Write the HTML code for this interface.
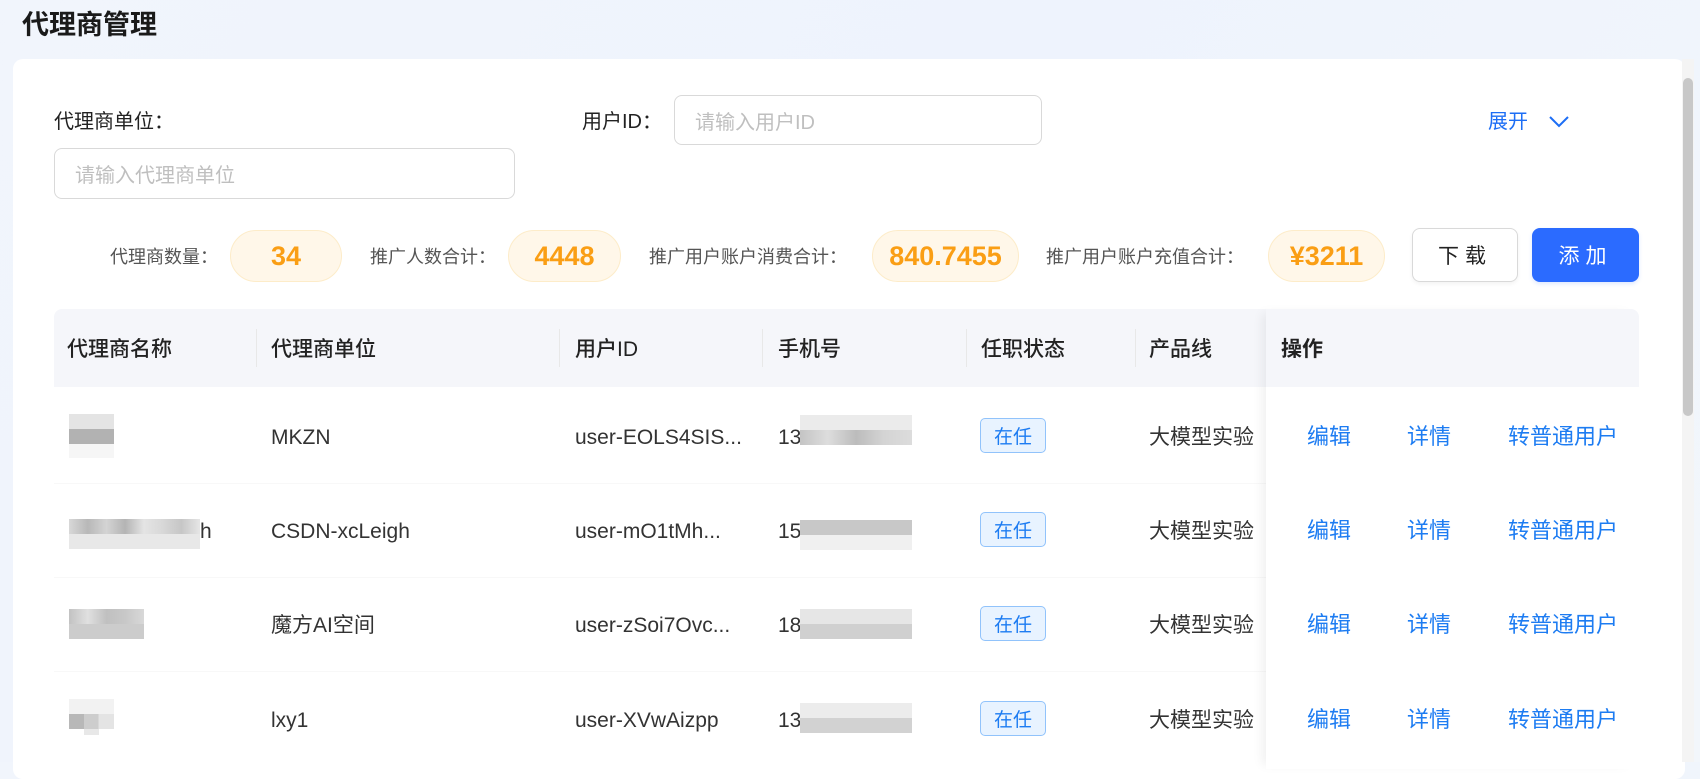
<!DOCTYPE html>
<html><head><meta charset="utf-8">
<style>
*{margin:0;padding:0;box-sizing:border-box}
body{width:1700px;height:762px;overflow:hidden;position:relative;background:linear-gradient(120deg,#f1f5fc 0%,#eef3fd 50%,#f2f6fb 100%);font-family:"Liberation Sans","Noto Sans CJK SC",sans-serif;color:#333}
.a{position:absolute;white-space:nowrap;line-height:30px}
.card{position:absolute;left:13px;top:59px;width:1672px;height:720px;background:#fff;border-radius:10px}
.lbl{font-size:20px;color:#222}
.inp{position:absolute;border:1px solid #d9d9d9;border-radius:8px;background:#fff;font-size:20px;color:#bfbfbf;padding-left:20px;display:flex;align-items:center}
.sl{font-size:18px;color:#555;top:242px}
.pill{position:absolute;top:230px;height:52px;border-radius:26px;background:#fff7e9;border:1px solid #fdecc9;color:#fa9e14;font-weight:bold;font-size:27px;display:flex;align-items:center;justify-content:center}
.btn{position:absolute;top:228px;height:54px;border-radius:8px;font-size:21px;display:flex;align-items:center;justify-content:center;letter-spacing:6px}
.th{font-size:21px;color:#222;font-weight:500;top:335px}
.sep{position:absolute;top:329px;width:1px;height:38px;background:#e8e8e8}
.td{font-size:21px;color:#333}
.tag{position:absolute;left:980px;width:66px;height:35px;border:1px solid #91c3fb;background:#e8f3ff;border-radius:5px;color:#1d7cf2;font-size:19px;display:flex;align-items:center;justify-content:center}
.lk{font-size:22px;color:#1d7cf2}
.rl{position:absolute;left:54px;width:1212px;height:1px;background:#f8f8f8}
.bl{position:absolute}
</style></head><body>
<div class="a" style="left:22px;top:10px;font-size:27px;font-weight:bold;color:#1a1a1a">代理商管理</div>
<div class="card"></div>

<div class="a lbl" style="left:54px;top:107px">代理商单位：</div>
<div class="inp" style="left:54px;top:148px;width:461px;height:51px">请输入代理商单位</div>
<div class="a lbl" style="left:582px;top:107px">用户ID：</div>
<div class="inp" style="left:674px;top:95px;width:368px;height:50px">请输入用户ID</div>
<div class="a" style="left:1488px;top:107px;font-size:20px;color:#1d6ef5">展开</div>
<svg class="a" style="left:1548px;top:113px" width="22" height="16" viewBox="0 0 22 16"><path d="M2 4 L11 13 L20 4" fill="none" stroke="#1d6ef5" stroke-width="2"/></svg>

<div class="a sl" style="left:110px">代理商数量：</div>
<div class="pill" style="left:230px;width:112px">34</div>
<div class="a sl" style="left:370px">推广人数合计：</div>
<div class="pill" style="left:508px;width:113px">4448</div>
<div class="a sl" style="left:649px">推广用户账户消费合计：</div>
<div class="pill" style="left:872px;width:147px">840.7455</div>
<div class="a sl" style="left:1046px">推广用户账户充值合计：</div>
<div class="pill" style="left:1268px;width:117px">¥3211</div>
<div class="btn" style="left:1412px;width:106px;border:1px solid #d9d9d9;color:#222;background:#fff;box-shadow:0 2px 4px rgba(0,0,0,.05)">下载</div>
<div class="btn" style="left:1532px;width:107px;background:#2b6bff;color:#fff;box-shadow:0 2px 4px rgba(43,107,255,.15)">添加</div>

<div class="a" style="left:54px;top:309px;width:1585px;height:78px;background:#f5f6fa;border-radius:8px 8px 0 0"></div>
<div class="a th" style="left:67px">代理商名称</div>
<div class="sep" style="left:256px"></div>
<div class="a th" style="left:271px">代理商单位</div>
<div class="sep" style="left:559px"></div>
<div class="a th" style="left:575px">用户ID</div>
<div class="sep" style="left:762px"></div>
<div class="a th" style="left:778px">手机号</div>
<div class="sep" style="left:966px"></div>
<div class="a th" style="left:981px">任职状态</div>
<div class="sep" style="left:1135px"></div>
<div class="a th" style="left:1149px">产品线</div>

<div class="rl" style="top:483px"></div>
<div class="rl" style="top:577px"></div>
<div class="rl" style="top:671px"></div>

<div class="a td" style="left:271px;top:423px">MKZN</div>
<div class="a td" style="left:575px;top:423px">user-EOLS4SIS...</div>
<div class="a td" style="left:778px;top:423px">13</div>
<div class="tag" style="top:418px">在任</div>
<div class="a td" style="left:1149px;top:423px">大模型实验</div>

<div class="a td" style="left:271px;top:517px">CSDN-xcLeigh</div>
<div class="a td" style="left:575px;top:517px">user-mO1tMh...</div>
<div class="a td" style="left:778px;top:517px">15</div>
<div class="a td" style="left:200px;top:517px">h</div>
<div class="tag" style="top:512px">在任</div>
<div class="a td" style="left:1149px;top:517px">大模型实验</div>

<div class="a td" style="left:271px;top:611px">魔方AI空间</div>
<div class="a td" style="left:575px;top:611px">user-zSoi7Ovc...</div>
<div class="a td" style="left:778px;top:611px">18</div>
<div class="tag" style="top:606px">在任</div>
<div class="a td" style="left:1149px;top:611px">大模型实验</div>

<div class="a td" style="left:271px;top:706px">lxy1</div>
<div class="a td" style="left:575px;top:706px">user-XVwAizpp</div>
<div class="a td" style="left:778px;top:706px">13</div>
<div class="tag" style="top:701px">在任</div>
<div class="a td" style="left:1149px;top:706px">大模型实验</div>

<div class="bl" style="left:69px;top:414px;width:45px;height:15px;background:#e4e4e4"></div>
<div class="bl" style="left:69px;top:429px;width:45px;height:15px;background:#b2b2b2"></div>
<div class="bl" style="left:69px;top:444px;width:45px;height:14px;background:#f6f6f6"></div>

<div class="bl" style="left:69px;top:519px;width:131px;height:15px;background:linear-gradient(90deg,#d8d8d8,#b8b8b8,#d4d4d4,#b4b4b4,#e4e4e4,#d8d8d8,#c6c6c6,#e6e6e6)"></div>
<div class="bl" style="left:69px;top:534px;width:131px;height:15px;background:#e8e8e8"></div>

<div class="bl" style="left:69px;top:609px;width:75px;height:15px;background:linear-gradient(90deg,#c2c2c2,#e0e0e0,#c0c0c0,#c8c8c8,#d8d8d8)"></div>
<div class="bl" style="left:69px;top:624px;width:75px;height:15px;background:#cccccc"></div>

<div class="bl" style="left:69px;top:699px;width:45px;height:15px;background:#f2f2f2"></div>
<div class="bl" style="left:69px;top:714px;width:45px;height:15px;background:linear-gradient(90deg,#b8b8b8 33%,#cdcdcd 33%,#cdcdcd 66%,#e4e4e4 66%)"></div>
<div class="bl" style="left:84px;top:729px;width:15px;height:6px;background:#e8e8e8"></div>

<div class="bl" style="left:800px;top:415px;width:112px;height:15px;background:#ebebeb"></div>
<div class="bl" style="left:800px;top:430px;width:112px;height:15px;background:linear-gradient(90deg,#c4c4c4,#dddddd,#bcbcbc,#d4d4d4,#dcdcdc)"></div>
<div class="bl" style="left:800px;top:520px;width:112px;height:15px;background:#c8c8c8"></div>
<div class="bl" style="left:800px;top:535px;width:112px;height:15px;background:#f0f0f0"></div>
<div class="bl" style="left:800px;top:609px;width:112px;height:15px;background:#e6e6e6"></div>
<div class="bl" style="left:800px;top:624px;width:112px;height:15px;background:#d0d0d0"></div>
<div class="bl" style="left:800px;top:703px;width:112px;height:15px;background:#ececec"></div>
<div class="bl" style="left:800px;top:718px;width:112px;height:15px;background:#d2d2d2"></div>

<div class="a" style="left:1266px;top:309px;width:373px;height:460px;background:#fff;box-shadow:-8px 0 10px -4px rgba(0,0,0,.06)"></div>
<div class="a" style="left:1266px;top:309px;width:373px;height:78px;background:#f5f6fa;border-radius:0 8px 0 0"></div>
<div class="a th" style="left:1281px;font-weight:bold">操作</div>
<div class="a lk" style="left:1307px;top:422px">编辑</div><div class="a lk" style="left:1407px;top:422px">详情</div><div class="a lk" style="left:1508px;top:422px">转普通用户</div>
<div class="a lk" style="left:1307px;top:516px">编辑</div><div class="a lk" style="left:1407px;top:516px">详情</div><div class="a lk" style="left:1508px;top:516px">转普通用户</div>
<div class="a lk" style="left:1307px;top:610px">编辑</div><div class="a lk" style="left:1407px;top:610px">详情</div><div class="a lk" style="left:1508px;top:610px">转普通用户</div>
<div class="a lk" style="left:1307px;top:705px">编辑</div><div class="a lk" style="left:1407px;top:705px">详情</div><div class="a lk" style="left:1508px;top:705px">转普通用户</div>

<div class="a" style="left:1682px;top:59px;width:12px;height:703px;background:#f4f4f4"></div>
<div class="a" style="left:1683px;top:78px;width:10px;height:338px;background:#c8c8c8;border-radius:5px"></div>
</body></html>
